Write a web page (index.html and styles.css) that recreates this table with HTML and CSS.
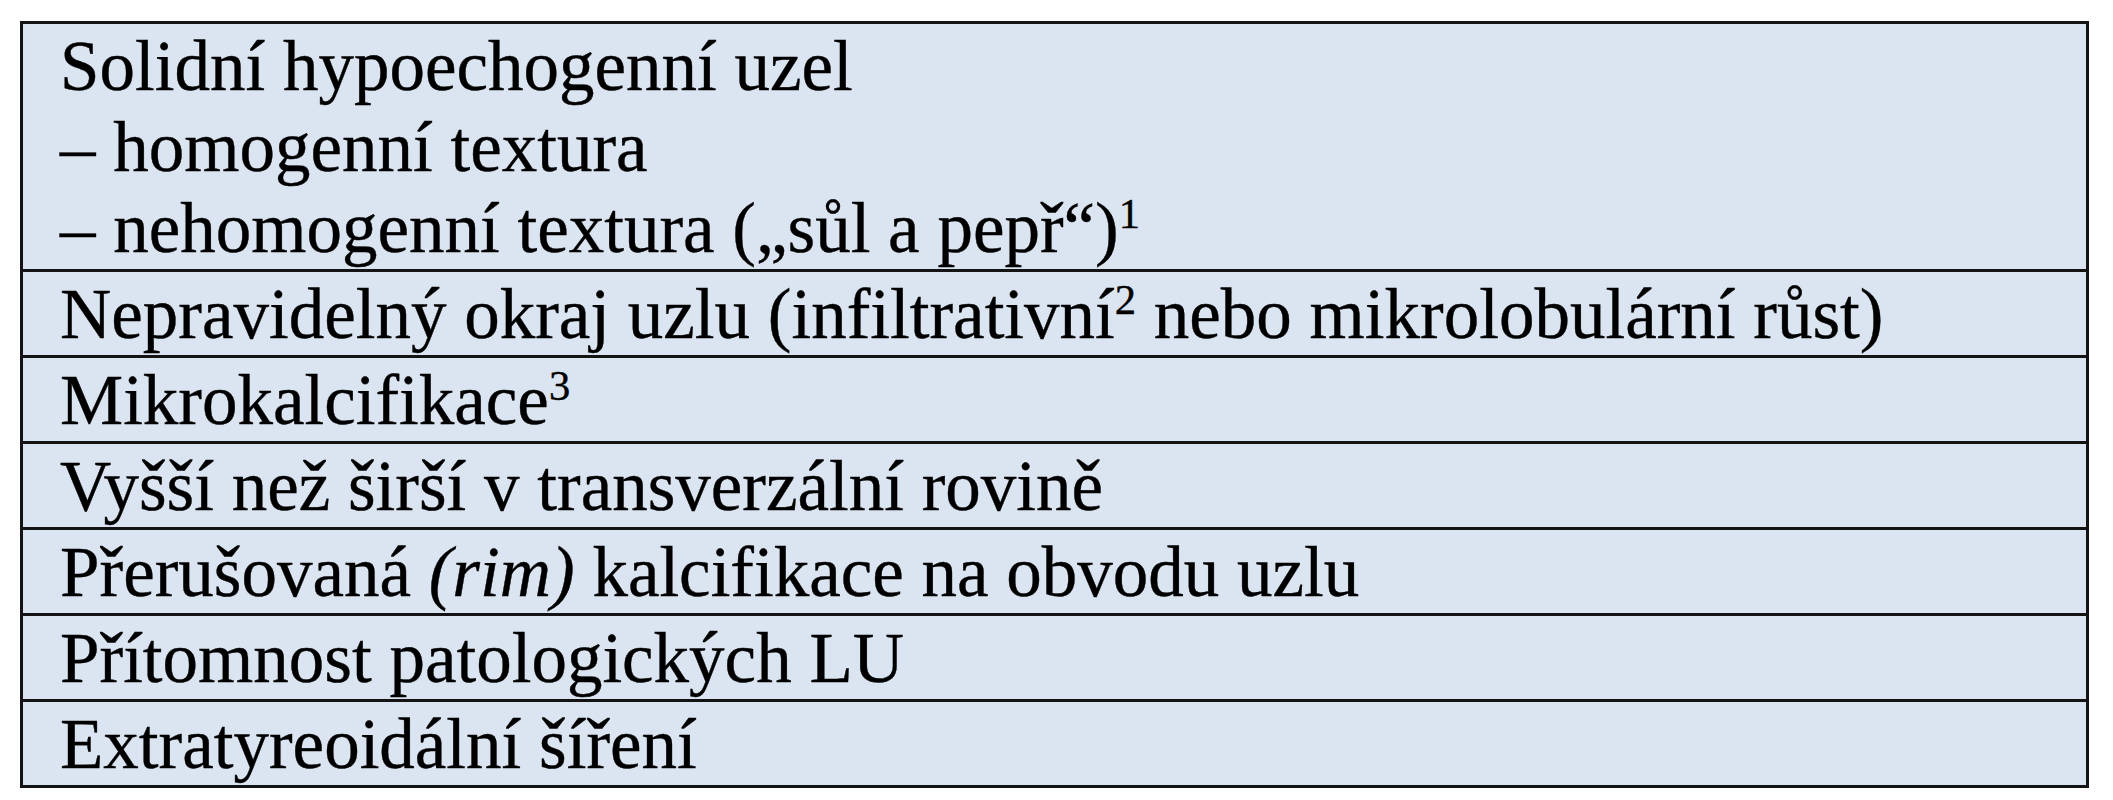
FILE: index.html
```html
<!DOCTYPE html>
<html lang="cs">
<head>
<meta charset="utf-8">
<link rel="stylesheet" href="styles.css">
</head>
<body>
<table class="criteria">
  <tr><td><span class="txt">Solidní hypoechogenní uzel<br>– homogenní textura<br>– nehomogenní textura („sůl a pepř“)<sup>1</sup></span></td></tr>
  <tr><td><span class="txt">Nepravidelný okraj uzlu (infiltrativní<sup>2</sup> nebo mikrolobulární růst)</span></td></tr>
  <tr><td><span class="txt">Mikrokalcifikace<sup>3</sup></span></td></tr>
  <tr><td><span class="txt">Vyšší než širší v transverzální rovině</span></td></tr>
  <tr><td><span class="txt">Přerušovaná <em>(rim)</em> kalcifikace na obvodu uzlu</span></td></tr>
  <tr><td><span class="txt">Přítomnost patologických LU</span></td></tr>
  <tr><td><span class="txt">Extratyreoidální šíření</span></td></tr>
</table>
</body>
</html>
```

FILE: styles.css
```css
html, body {
  margin: 0;
  padding: 0;
  background: #ffffff;
}
body {
  padding: 21px 0 0 20px;
}
.criteria {
  border-collapse: collapse;
  width: 2069px;
  background: #dbe5f1;
  font-family: "Liberation Serif", "Times New Roman", serif;
  font-size: 71px;
  line-height: 81px;
  color: #000;
}
.criteria td {
  border: 3px solid #141414;
  padding: 2px 37px 0 37px;
  vertical-align: top;
  white-space: nowrap;
}
.txt {
  -webkit-text-stroke: 0.4px #000;
}
.criteria sup {
  font-size: 0.6em;
  line-height: 0;
  vertical-align: 0.56em;
}
.criteria em {
  font-style: italic;
}
```
